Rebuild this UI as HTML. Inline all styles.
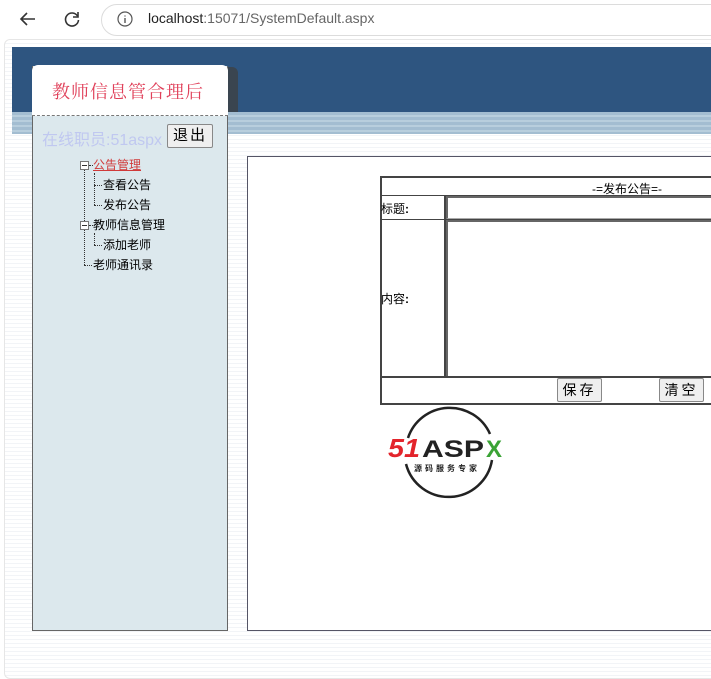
<!DOCTYPE html>
<html><head><meta charset="utf-8"><style>
*{margin:0;padding:0;box-sizing:border-box}
body{width:711px;height:655px;overflow:hidden;background:#fff;font-family:"Liberation Sans","Noto Sans CJK SC",sans-serif;position:relative}
.abs{position:absolute}
.url{left:101px;top:4px;width:640px;height:32px;border:1px solid #dcdcdc;border-radius:16px;background:#fff}
.page{left:4px;top:39px;width:720px;height:640px;border:1px solid #e6e6e6;border-radius:6px;background:repeating-linear-gradient(#fff 0 3px,#f2f4f7 3px 4px)}
.hdr{left:12px;top:47px;width:700px;height:65px;background:#2e5580}
.strip{left:12px;top:112px;width:700px;height:22px;background:repeating-linear-gradient(#a3bdd1 0 3px,#b8cedd 3px 5px)}
.panel{left:32px;top:66px;width:196px;height:565px;background:#dce8ed;border:1px solid #666;border-top:none}
.tab{left:32px;top:65px;width:196px;height:51px;background:#fff;border-radius:6px 6px 0 0;border-bottom:1px dashed #777}
.shadow{left:222px;top:67px;width:16px;height:45px;background:#3a4550;border-radius:0 6px 0 0}
.tree{font-size:12px;color:#000;line-height:20px}
.dot{border-left:1px dotted #333}
.dh{border-top:1px dotted #333;height:1px}
.content{left:247px;top:156px;width:470px;height:475px;background:#fff;border:1px solid #556;border-right:none}
.btn{position:absolute;height:24px;background:#efefef;border:1px solid #888;border-radius:2px;font-size:14px;letter-spacing:3px;text-align:center;line-height:22px}
</style></head><body>
<svg class="abs" style="left:18px;top:9px" width="20" height="20" viewBox="0 0 20 20"><path d="M17 10H3M9 4L3 10l6 6" stroke="#333" stroke-width="1.6" fill="none"/></svg>
<svg class="abs" style="left:62px;top:9px" width="20" height="20" viewBox="0 0 20 20"><path d="M15.5 7A6.5 6.5 0 1 0 16.5 11" stroke="#333" stroke-width="1.6" fill="none"/><path d="M16 3v5h-5" stroke="#333" stroke-width="1.6" fill="none"/></svg>
<div class="abs url"></div>
<svg class="abs" style="left:117px;top:11px" width="16" height="16" viewBox="0 0 16 16"><circle cx="8" cy="8" r="7" stroke="#555" fill="none" stroke-width="1.2"/><path d="M8 7v5M8 4.5v1" stroke="#555" stroke-width="1.4"/></svg>
<div class="abs" style="left:148px;top:10px;font-size:14px;color:#222">localhost<span style="color:#666">:15071/SystemDefault.aspx</span></div>
<div class="abs page"></div>
<div class="abs hdr"></div>
<div class="abs strip"></div>
<div class="abs shadow"></div>
<div class="abs panel"></div>
<div class="abs tab"></div>
<div class="abs" style="left:52px;top:78px;font-size:18px;color:#e0405a;font-family:'Noto Serif CJK SC',serif;letter-spacing:1px">教师信息管合理后</div>
<div class="abs" style="left:42px;top:126px;font-size:16px;color:#c0c8f0">在线职员:51aspx</div>
<div class="btn" style="left:167px;top:124px;width:46px;font-size:15px;letter-spacing:2px">退出</div>
<div class="abs tree" style="left:78px;top:155px;width:120px;height:120px">
  <div class="abs" style="left:2px;top:6px;width:9px;height:9px;border:1px solid #777;background:#fff"><div style="margin:3px 1px;height:1px;background:#333"></div></div>
  <div class="abs dh" style="left:11px;top:10px;width:4px"></div>
  <div class="abs" style="left:15px;top:0;color:#d03a3a;text-decoration:underline">公告管理</div>
  <div class="abs dot" style="left:16px;top:18px;height:32px"></div>
  <div class="abs dh" style="left:16px;top:30px;width:8px"></div><div class="abs" style="left:25px;top:20px">查看公告</div>
  <div class="abs dh" style="left:16px;top:50px;width:8px"></div><div class="abs" style="left:25px;top:40px">发布公告</div>
  <div class="abs dot" style="left:6px;top:15px;height:95px"></div>
  <div class="abs" style="left:2px;top:66px;width:9px;height:9px;border:1px solid #777;background:#fff"><div style="margin:3px 1px;height:1px;background:#333"></div></div>
  <div class="abs dh" style="left:11px;top:70px;width:4px"></div>
  <div class="abs" style="left:15px;top:60px">教师信息管理</div>
  <div class="abs dot" style="left:16px;top:78px;height:12px"></div>
  <div class="abs dh" style="left:16px;top:90px;width:8px"></div><div class="abs" style="left:25px;top:80px">添加老师</div>
  <div class="abs dh" style="left:6px;top:110px;width:8px"></div><div class="abs" style="left:15px;top:100px">老师通讯录</div>
</div>
<div class="abs content"></div>
<div class="abs" style="left:380px;top:176px;width:340px;height:229px;border:2px solid #444;border-right:none;font-size:12px">
  <div class="abs" style="left:0;top:0;width:340px;height:18px;border-bottom:1px solid #444"></div>
  <div class="abs" style="left:210px;top:2px">-=发布公告=-</div>
  <div class="abs" style="left:62px;top:18px;width:2px;height:181px;background:#444"></div>
  <div class="abs" style="left:0;top:41px;width:340px;height:1px;background:#444"></div>
  <div class="abs" style="left:64px;top:18px;width:280px;height:23px;border-top:2px solid #666;border-left:2px solid #666;border-bottom:1px solid #aaa"></div>
  <div class="abs" style="left:64px;top:42px;width:280px;height:157px;border-top:2px solid #666;border-left:2px solid #666"></div>
  <div class="abs" style="left:0;top:198px;width:340px;height:2px;background:#444"></div>
  <div class="abs" style="left:-1px;top:22px">标题<b>:</b></div>
  <div class="abs" style="left:-1px;top:112px">内容<b>:</b></div>
</div>
<div class="btn" style="left:557px;top:378px;width:45px">保存</div>
<div class="btn" style="left:659px;top:378px;width:45px">清空</div>
<svg class="abs" style="left:384px;top:400px" width="130" height="100" viewBox="0 0 130 100">
  <path d="M24 38A44 44 0 0 1 106 34" stroke="#222" stroke-width="2.5" fill="none"/>
  <path d="M108 60A44 44 0 0 1 22 64" stroke="#222" stroke-width="2.5" fill="none"/>
  <text x="4" y="57" font-family="Liberation Sans" font-weight="bold" font-style="italic" font-size="26" fill="#e3242b" textLength="32" lengthAdjust="spacingAndGlyphs">51</text>
  <text x="38" y="57" font-family="Liberation Sans" font-weight="bold" font-size="24" fill="#222" textLength="62" lengthAdjust="spacingAndGlyphs">ASP</text>
  <text x="102" y="57" font-family="Liberation Sans" font-weight="bold" font-size="24" fill="#3aa335">X</text>
  <text x="30" y="71" font-family="Noto Sans CJK SC" font-size="8" font-weight="bold" fill="#222" letter-spacing="3">源码服务专家</text>
</svg>
</body></html>
